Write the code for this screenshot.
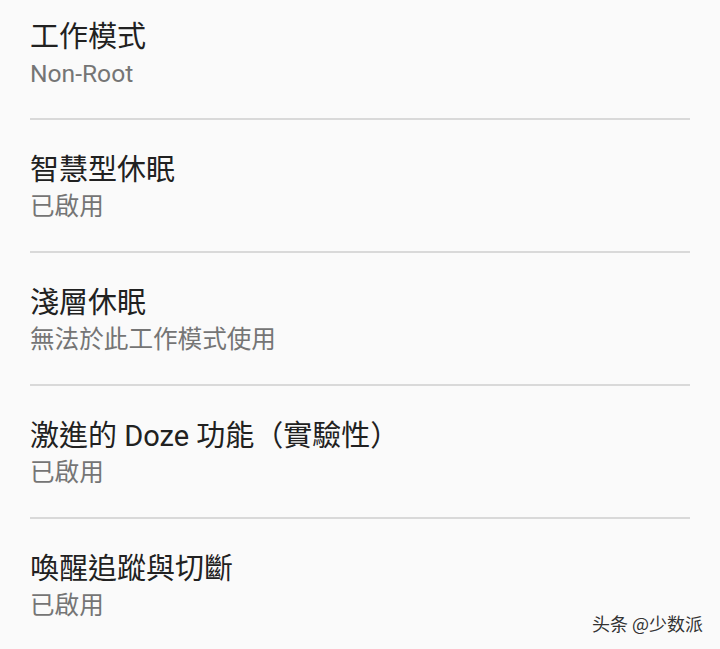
import React from 'react';

const rows = [
  { title: '工作模式', sub: 'Non-Root' },
  { title: '智慧型休眠', sub: '已啟用' },
  { title: '淺層休眠', sub: '無法於此工作模式使用' },
  { title: '激進的 Doze 功能（實驗性）', sub: '已啟用' },
  { title: '喚醒追蹤與切斷', sub: '已啟用' },
];

export default function App() {
  return (
    <div
      className="relative w-[720px] h-[649px] overflow-hidden bg-[#fafafa]"
      style={{ fontFamily: 'Roboto, "Noto Sans CJK TC", sans-serif' }}
    >
      <div className="-mt-[13px]">
        {rows.map((row, i) => (
          <div key={i} className="px-[30px]">
            <div className="pt-[32px] pb-[25px]">
              <div className="text-[29px] leading-[36px] text-[#212121]">{row.title}</div>
              <div className="text-[24.6px] leading-[38px] text-[#757575]">{row.sub}</div>
            </div>
            <div className="h-[2px] bg-[#d9d9d9]" />
          </div>
        ))}
      </div>

      {/* watermark */}
      <div
        className="absolute right-[17px] bottom-[14px] text-[18px] leading-[24px] text-[#333]"
        style={{
          fontFamily: '"Noto Sans CJK SC", sans-serif',
          textShadow: '0 0 2px #fff, 0 0 2px #fff',
        }}
      >
        头条 @少数派
      </div>
    </div>
  );
}
